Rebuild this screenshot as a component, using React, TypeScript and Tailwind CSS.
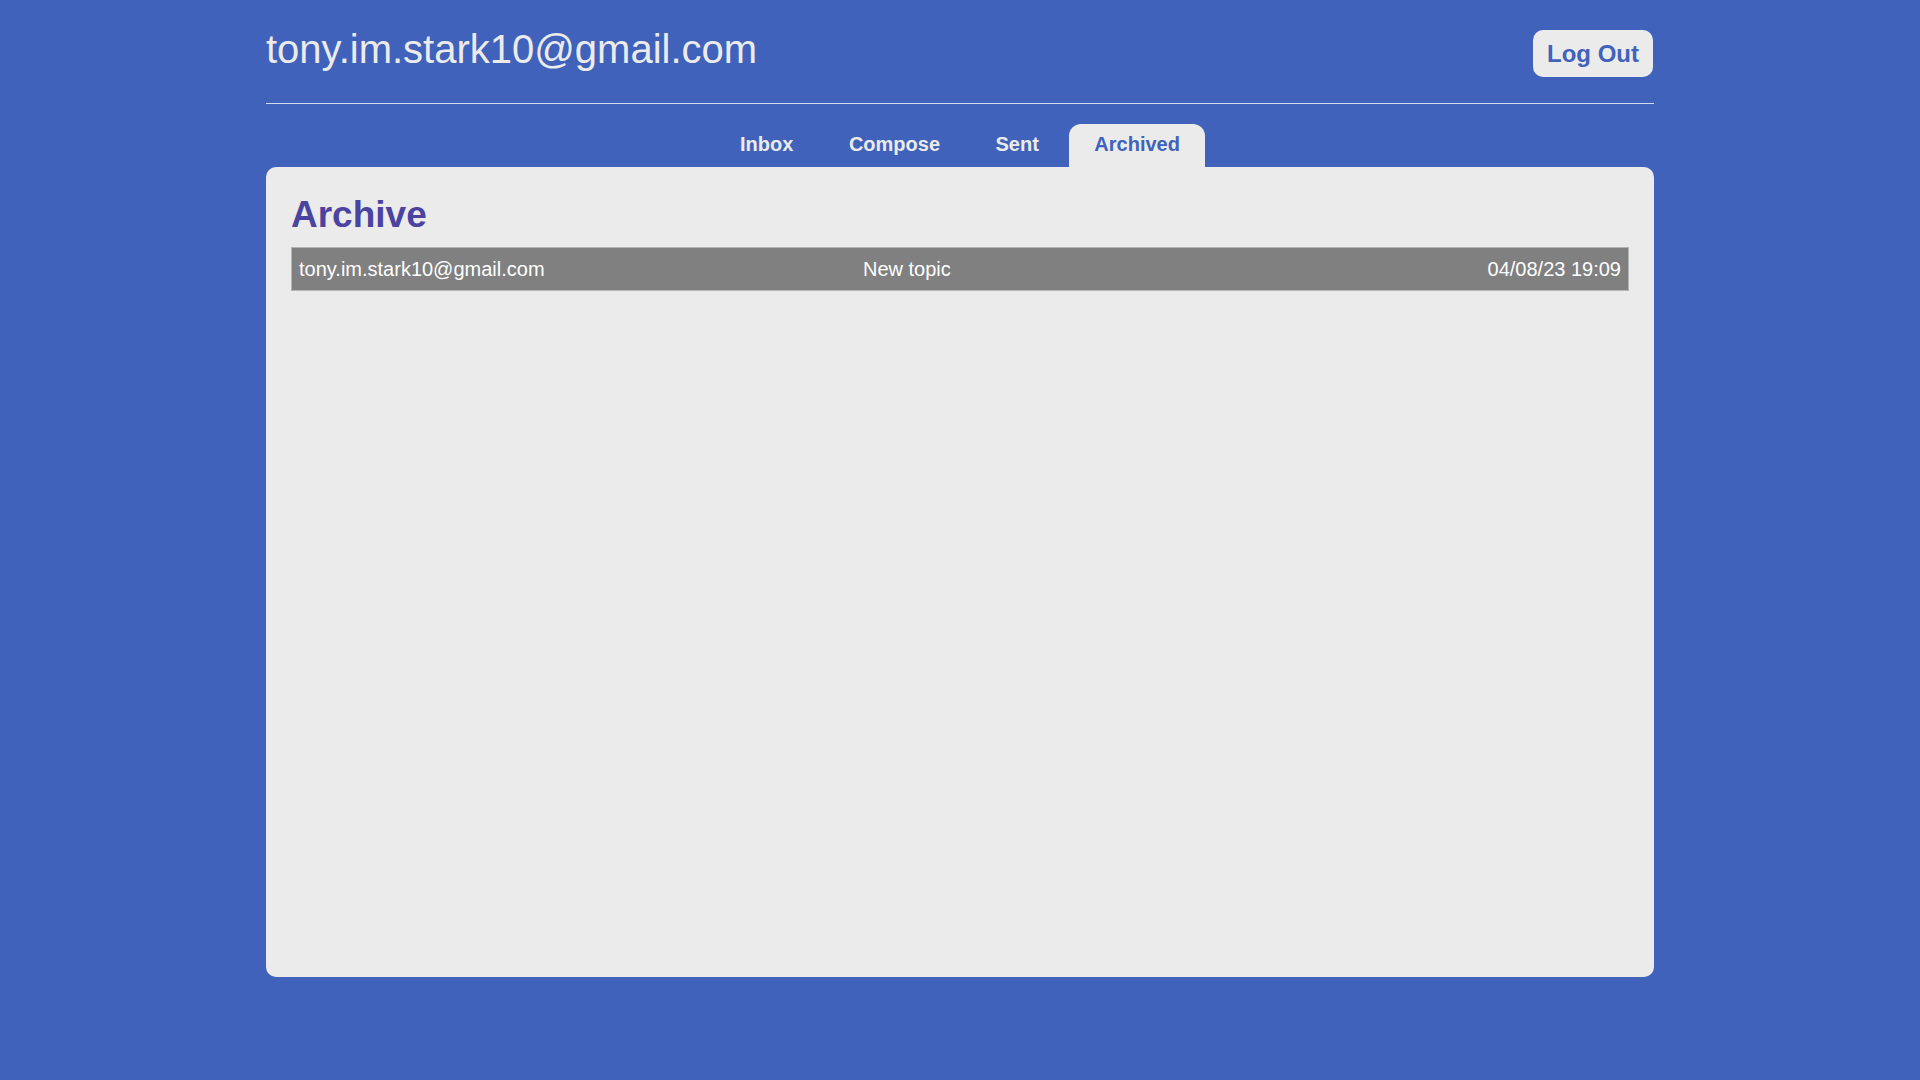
import React from "react";

interface Mail {
  id: number;
  sender: string;
  subject: string;
  timestamp: string;
}

const archived: Mail[] = [
  {
    id: 1,
    sender: "tony.im.stark10@gmail.com",
    subject: "New topic",
    timestamp: "04/08/23 19:09",
  },
];

const tabs = ["Inbox", "Compose", "Sent", "Archived"];

const App: React.FC = () => {
  const active = "Archived";

  return (
    <div className="min-h-screen w-full bg-[#4062bb] font-['Liberation_Sans',Arial,sans-serif]">
      <div className="mx-auto w-[1388px]">
        {/* header */}
        <div className="flex h-[104px] items-start justify-between border-b border-[#d5dbef]">
          <h1 className="pt-[26px] text-[40px] leading-[46px] text-[#ebebeb]">
            tony.im.stark10@gmail.com
          </h1>
          <button className="mt-[30px] mr-px flex h-[47px] items-center rounded-[10px] bg-[#ebebeb] px-[14px] text-[24px] leading-[28px] font-bold text-[#4062bb]">
            Log Out
          </button>
        </div>

        {/* tabs */}
        <div className="mt-[20px] flex items-end justify-center gap-[5.5px]">
          {tabs.map((tab) => (
            <button
              key={tab}
              className={
                tab === active
                  ? "rounded-t-[12px] bg-[#ebebeb] px-[25px] pt-[9px] pb-[11px] text-[20px] leading-[23px] font-bold text-[#4062bb]"
                  : "px-[25px] pt-[9px] pb-[11px] text-[20px] leading-[23px] font-bold text-[#ebebeb]"
              }
            >
              {tab}
            </button>
          ))}
        </div>

        {/* panel */}
        <div className="h-[810px] rounded-[10px] bg-[#ebebeb] px-[25px] pt-[27px]">
          <h2 className="text-[37px] leading-[42px] font-bold text-[#4a43a0]">
            Archive
          </h2>
          <div className="mt-[11px] flex flex-col">
            {archived.map((mail) => (
              <div
                key={mail.id}
                className="flex border border-[#b4b4b4] bg-[#808080] px-[7px] pt-[10px] pb-[9px] text-[20px] leading-[23px] text-white"
              >
                <span className="w-[564px]">{mail.sender}</span>
                <span className="flex-1">{mail.subject}</span>
                <span>{mail.timestamp}</span>
              </div>
            ))}
          </div>
        </div>
      </div>
    </div>
  );
};

export default App;
